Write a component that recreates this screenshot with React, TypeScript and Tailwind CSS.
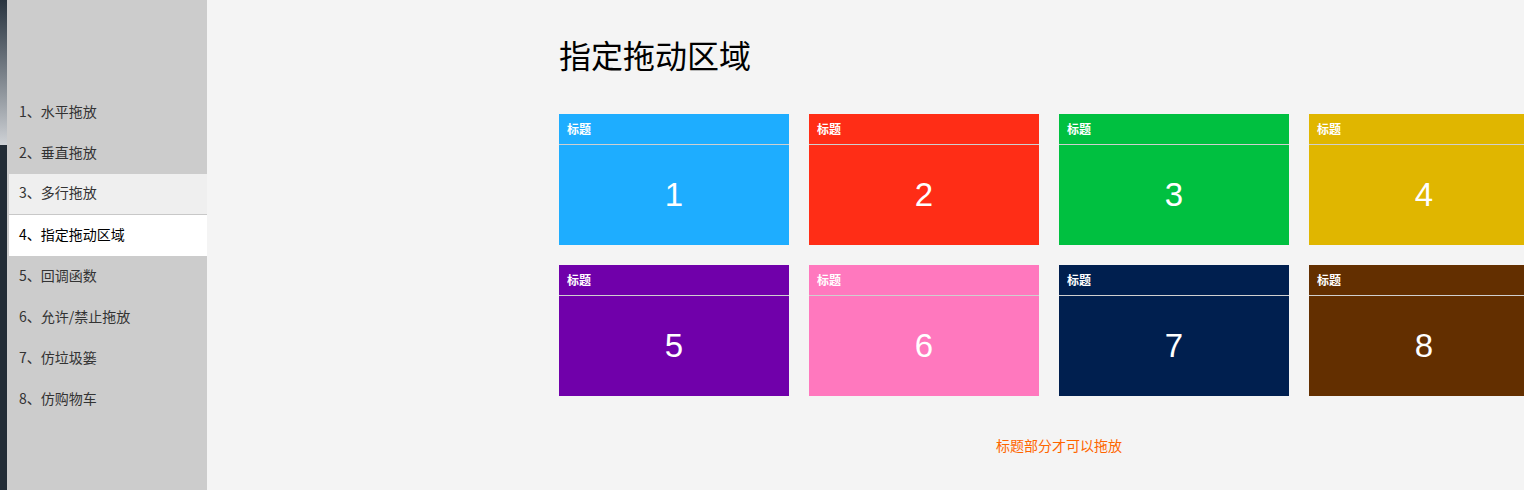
const menu = ['水平拖放', '垂直拖放', '多行拖放', '指定拖动区域', '回调函数', '允许/禁止拖放', '仿垃圾篓', '仿购物车'];

const cards = [
  { n: 1, bg: 'bg-[#1eadff]' },
  { n: 2, bg: 'bg-[#ff2d16]' },
  { n: 3, bg: 'bg-[#00c040]' },
  { n: 4, bg: 'bg-[#e0b600]' },
  { n: 5, bg: 'bg-[#7000aa]' },
  { n: 6, bg: 'bg-[#ff78be]' },
  { n: 7, bg: 'bg-[#001f4f]' },
  { n: 8, bg: 'bg-[#632f00]' },
];

function Sidebar() {
  return (
    <aside className="flex w-[207px] shrink-0">
      <div className="flex w-[7px] flex-col">
        <div className="h-[145px] bg-gradient-to-b from-[#2a3540] to-[#cfd2d6]" />
        <div className="flex-1 bg-[#222c36]" />
      </div>
      <div className="flex-1 bg-[#cccccc] pl-[2px] pt-[92px]">
        {menu.map((m, i) => {
          const cls =
            i === 3
              ? 'bg-white text-black'
              : i === 2
                ? 'bg-[#efefef] text-[#333] border-b border-[#c8c8c8]'
                : 'text-[#333]';
          return (
            <div key={m} className={`flex h-[41px] items-center pb-[3px] pl-[10px] text-[14px] ${cls}`}>
              {i + 1}、{m}
            </div>
          );
        })}
      </div>
    </aside>
  );
}

function Card({ n, bg }: { n: number; bg: string }) {
  return (
    <div className={`h-[131px] w-[230px] ${bg} text-white`}>
      <div className="flex h-[31px] items-center border-b border-[#cfcfcf] pl-[8px] text-[12px] font-bold">标题</div>
      <div className="flex h-[100px] items-center justify-center font-['Liberation_Sans',Arial,sans-serif] text-[33px]">
        {n}
      </div>
    </div>
  );
}

export default function App() {
  return (
    <div className="flex h-[490px] w-[1524px] overflow-hidden bg-[#f4f4f4] font-['Noto_Sans_CJK_SC','Noto_Sans',sans-serif]">
      <Sidebar />
      <main className="w-[1000px] shrink-0 pl-[352px] pt-[35px]">
        <div className="w-[1000px]">
          <h1 className="text-[32px] leading-[38px] text-black">指定拖动区域</h1>
          <div className="mt-[41px] grid grid-cols-[repeat(4,230px)] gap-x-[20px] gap-y-[20px]">
            {cards.map((c) => (
              <Card key={c.n} n={c.n} bg={c.bg} />
            ))}
          </div>
          <p className="mt-[39px] text-center text-[14px] leading-[20px] text-[#ff6600]">标题部分才可以拖放</p>
        </div>
      </main>
    </div>
  );
}
